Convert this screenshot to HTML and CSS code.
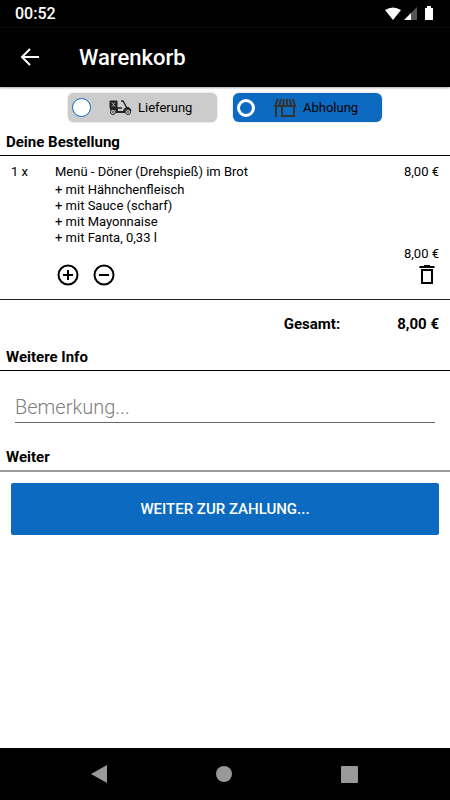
FILE: index.html
```html
<!DOCTYPE html>
<html lang="de">
<head>
<meta charset="utf-8">
<meta name="viewport" content="width=device-width, initial-scale=1">
<title>Warenkorb</title>
<link rel="stylesheet" href="styles.css">
</head>
<body>
<div class="status">
  <span>00:52</span>
  <svg width="52" height="16" viewBox="0 0 52 16" fill="#fff" aria-hidden="true">
    <path d="M1 4Q9-1 17 4L9 14Z"/>
    <path d="M33 1V14H27V7Z" fill="#555"/><path d="M27 7V14H20Z"/>
    <path d="M41 2h2V0h4v2H49v12H41Z"/>
  </svg>
</div>
<header class="appbar">
  <button class="icon-button" aria-label="Zurück">
    <svg width="20" height="20" viewBox="0 0 20 20" fill="none" stroke="#fff" stroke-width="2"><path d="M19 9H3M10 1L2 9L10 17"/></svg>
  </button>
  <h1>Warenkorb</h1>
</header>
<main>
  <div class="modes">
    <label class="mode">
      <input type="radio" name="mode">
      <svg width="24" height="16" viewBox="0 0 24 16" fill="none" stroke="#222" aria-hidden="true">
        <path d="M2 1h7v7H2Z" fill="#222"/><path d="M4 2.500l3 4M7 2.500l-3 4" stroke="#bbb"/>
        <path d="M2 9h7v2M8 12h8q0-4 5-4" stroke-width="2"/>
        <path d="M13 1h2l4 7q3 0 4 3M9 8h5" stroke-width="1.300"/>
        <circle cx="5" cy="12" r="2.500" fill="#ccc"/><circle cx="20" cy="12" r="2.500" fill="#ccc"/>
        <circle cx="5" cy="12" r=".4"/><circle cx="20" cy="12" r=".4"/>
      </svg>
      <span>Lieferung</span>
    </label>
    <label class="mode mode-active">
      <input type="radio" name="mode" checked>
      <svg width="24" height="20" viewBox="0 0 24 20" fill="none" stroke="#333" aria-hidden="true">
        <path d="M5 1L2 8M8 1L6 8M11 1L10 8M14 1v7M17 1l1 7M20 1l2 7" stroke-width="2"/>
        <path d="M1 8h22" stroke-width="2"/>
        <path d="M3 9v10M9 9v10M9 18h12M21 9v10" stroke-width="2"/>
      </svg>
      <span>Abholung</span>
    </label>
  </div>
  <h2>Deine Bestellung</h2>
  <section class="item">
    <span>1 x</span>
    <div>
      <div>Menü - Döner (Drehspieß) im Brot</div>
      <ul>
        <li>+ mit Hähnchenfleisch</li>
        <li>+ mit Sauce (scharf)</li>
        <li>+ mit Mayonnaise</li>
        <li>+ mit Fanta, 0,33 l</li>
      </ul>
    </div>
    <span>8,00 €</span>
    <span class="subtotal">8,00 €</span>
    <div class="actions">
      <button class="icon-button" aria-label="Mehr"><svg width="26" height="24" viewBox="0 0 26 24" fill="none" stroke="#000" stroke-width="2"><circle cx="13" cy="12" r="9.500"/><path d="M13 7v10M8 12h10"/></svg></button>
      <button class="icon-button" aria-label="Weniger"><svg width="26" height="24" viewBox="0 0 26 24" fill="none" stroke="#000" stroke-width="2"><circle cx="13" cy="12" r="9.500"/><path d="M8 12h10"/></svg></button>
      <button class="icon-button remove" aria-label="Entfernen"><svg width="24" height="24" viewBox="0 0 24 24" fill="none" stroke="#000" stroke-width="2"><path d="M7 7h10v13H7Z"/><path d="M4.500 4h15M9 3h6"/></svg></button>
    </div>
  </section>
  <div class="total"><span>Gesamt:</span><span>8,00 €</span></div>
  <h2>Weitere Info</h2>
  <div class="note"><input type="text" placeholder="Bemerkung..." aria-label="Bemerkung"></div>
  <h2 class="last">Weiter</h2>
  <button class="pay">WEITER ZUR ZAHLUNG...</button>
</main>
<nav class="navbar">
  <button class="icon-button" aria-label="Zurück"><svg width="18" height="18" viewBox="0 0 18 18" fill="#999"><path d="M1 9L17 0V18Z"/></svg></button>
  <button class="icon-button" aria-label="Start"><svg width="18" height="18" viewBox="0 0 18 18" fill="#999"><circle cx="9" cy="9" r="8"/></svg></button>
  <button class="icon-button" aria-label="Übersicht"><svg width="18" height="18" viewBox="0 0 18 18" fill="#999"><rect x="1" y="1" width="17" height="17" rx="1"/></svg></button>
</nav>
</body>
</html>
```
FILE: styles.css
```css
* { box-sizing: border-box; }
body {
  margin: 0;
  min-height: 100vh;
  display: flex;
  flex-direction: column;
  font: 13px/16px Roboto, sans-serif;
  color: #000;
  background: #fff;
}
svg { display: block; }
h1, h2, ul { margin: 0; padding: 0; }
ul { list-style: none; margin-top: 2px; }
.icon-button { padding: 0; border: 0; background: none; }
.status {
  display: flex;
  justify-content: space-between;
  align-items: center;
  height: 28px;
  padding: 0 14px 0 15px;
  background: #000;
  color: #fff;
  font-size: 16px;
  font-weight: 500;
}
.appbar {
  display: flex;
  align-items: center;
  gap: 39px;
  height: 59px;
  padding: 0 20px;
  background: #000;
  color: #fff;
  box-shadow: 0 1px 2px #aaa;
}
h1 { font-size: 22px; line-height: 28px; font-weight: 500; }
main { flex: 1; }
.modes { display: flex; justify-content: center; gap: 16px; padding-top: 6px; }
.mode {
  display: flex;
  align-items: center;
  width: 149px;
  height: 29px;
  padding-left: 4px;
  border-radius: 6px;
  background: #ccc;
  box-shadow: 0 0 2px #bbb;
}
.mode svg { width: 24px; margin: 0 6px 0 17px; }
.mode input {
  appearance: none;
  width: 19px;
  height: 19px;
  margin: 0;
  border: 1px solid #0d6ac1;
  border-radius: 50%;
  background: #fff;
}
.mode-active { background: #0d6ac1; }
.mode input:checked { width: 18px; height: 18px; border: 3px solid #fff; background: #0d6ac1; margin-right: 1px; }
h2 {
  padding: 10px 6px 3px;
  border-bottom: 1px solid #000;
  font-size: 15px;
  line-height: 20px;
  font-weight: 700;
}
.item {
  display: grid;
  grid-template-columns: 44px 1fr auto;
  padding: 8px 11px 12px;
  border-bottom: 1px solid #222;
}
.subtotal { grid-column: 3; }
.actions { grid-column: 2 / 4; display: flex; gap: 10px; margin-top: 1px; }
.remove { margin-left: auto; }
.total {
  display: flex;
  justify-content: flex-end;
  gap: 57px;
  padding: 14px 11px 3px;
  font-size: 15px;
  line-height: 20px;
  font-weight: 700;
}
.note { padding: 16px 15px 14px; }
.note input {
  display: block;
  width: 100%;
  height: 36px;
  padding: 4px 0 0;
  border: 0;
  border-bottom: 1px solid #666;
  font: 300 20px/24px Roboto, sans-serif;
}
.note input::placeholder { color: #808080; opacity: 1; }
.last { border-bottom: 2px solid #999; }
.pay {
  display: block;
  width: calc(100% - 22px);
  height: 52px;
  margin: 11px auto 0;
  border: 0;
  border-radius: 2px;
  background: #0d6ac1;
  color: #fff;
  font: 500 15px/20px Roboto, sans-serif;
}
.navbar {
  display: flex;
  justify-content: space-between;
  align-items: center;
  height: 52px;
  padding: 0 92px 0 90px;
  background: #000;
}
```
